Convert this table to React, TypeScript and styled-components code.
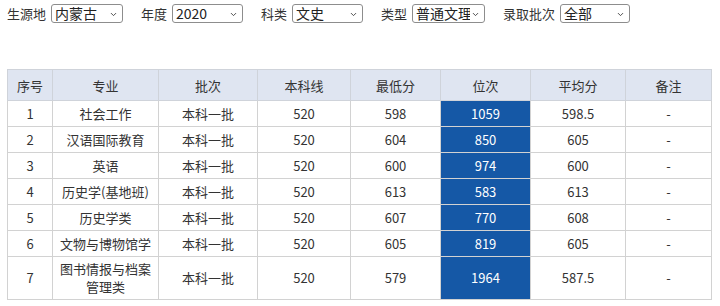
import styled, { createGlobalStyle } from "styled-components";
import { ChevronDown } from "lucide-react";

const GlobalStyle = createGlobalStyle`
  body {
    margin: 0;
    font-family: "Noto Sans CJK SC", "Noto Sans", sans-serif;
    color: #333;
    background: #fff;
  }
`;

const Page = styled.div`
  padding: 2px 7px 0;
`;

const Filters = styled.div`
  display: flex;
  align-items: center;
  height: 22px;
  font-size: 13px;
`;

const Field = styled.label`
  display: flex;
  align-items: center;
  gap: 5px;
  margin-right: 18px;
  white-space: nowrap;
`;

const SelectWrap = styled.span`
  position: relative;
  display: inline-flex;
`;

const Select = styled.select<{ $width: number }>`
  appearance: none;
  width: ${(p) => p.$width}px;
  height: 19px;
  margin: 0;
  padding: 0 14px 0 3px;
  font-size: 14px;
  line-height: 17px;
  font-family: "Noto Sans CJK SC", sans-serif;
  color: #222;
  background: #fff;
  border: 1px solid #8d8d8d;
  border-radius: 3px;
  outline: none;
`;

const Chevron = styled(ChevronDown)`
  position: absolute;
  right: 5px;
  top: 6px;
  width: 9px;
  height: 9px;
  color: #444;
  pointer-events: none;
`;

const Table = styled.table`
  margin-top: 45px;
  border-collapse: collapse;
  table-layout: fixed;
  width: 704px;
  font-size: 13px;
`;

const Th = styled.th`
  height: 30px;
  padding: 0;
  background: #dfe5f1;
  border: 1px solid #cfd3da;
  font-weight: normal;
  color: #333;
`;

const Td = styled.td<{ $rank?: boolean }>`
  height: 19px;
  padding: 3px 4px;
  text-align: center;
  line-height: 18px;
  border: 1px solid #d2d2d2;
  background: ${(p) => (p.$rank ? "#1558a6" : "#fff")};
  color: ${(p) => (p.$rank ? "#fff" : "#333")};
`;

const filters = [
  { label: "生源地", value: "内蒙古", width: 72 },
  { label: "年度", value: "2020", width: 71 },
  { label: "科类", value: "文史", width: 71 },
  { label: "类型", value: "普通文理", width: 73 },
  { label: "录取批次", value: "全部", width: 70 },
];

const cols = [45, 106, 99, 93, 90, 90, 95, 86];
const heads = ["序号", "专业", "批次", "本科线", "最低分", "位次", "平均分", "备注"];

const rows = [
  ["1", "社会工作", "598", "1059", "598.5"],
  ["2", "汉语国际教育", "604", "850", "605"],
  ["3", "英语", "600", "974", "600"],
  ["4", "历史学(基地班)", "613", "583", "613"],
  ["5", "历史学类", "607", "770", "608"],
  ["6", "文物与博物馆学", "605", "819", "605"],
  ["7", "图书情报与档案管理类", "579", "1964", "587.5"],
];

export default function App() {
  return (
    <Page>
      <GlobalStyle />
      <Filters>
        {filters.map((f) => (
          <Field key={f.label}>
            {f.label}
            <SelectWrap>
              <Select $width={f.width} defaultValue={f.value}>
                <option>{f.value}</option>
              </Select>
              <Chevron strokeWidth={2.5} />
            </SelectWrap>
          </Field>
        ))}
      </Filters>
      <Table>
        <colgroup>
          {cols.map((w, i) => (
            <col key={i} style={{ width: w }} />
          ))}
        </colgroup>
        <thead>
          <tr>
            {heads.map((h) => (
              <Th key={h}>{h}</Th>
            ))}
          </tr>
        </thead>
        <tbody>
          {rows.map(([no, major, low, rank, avg]) => (
            <tr key={no}>
              <Td>{no}</Td>
              <Td>{major}</Td>
              <Td>本科一批</Td>
              <Td>520</Td>
              <Td>{low}</Td>
              <Td $rank>{rank}</Td>
              <Td>{avg}</Td>
              <Td>-</Td>
            </tr>
          ))}
        </tbody>
      </Table>
    </Page>
  );
}
